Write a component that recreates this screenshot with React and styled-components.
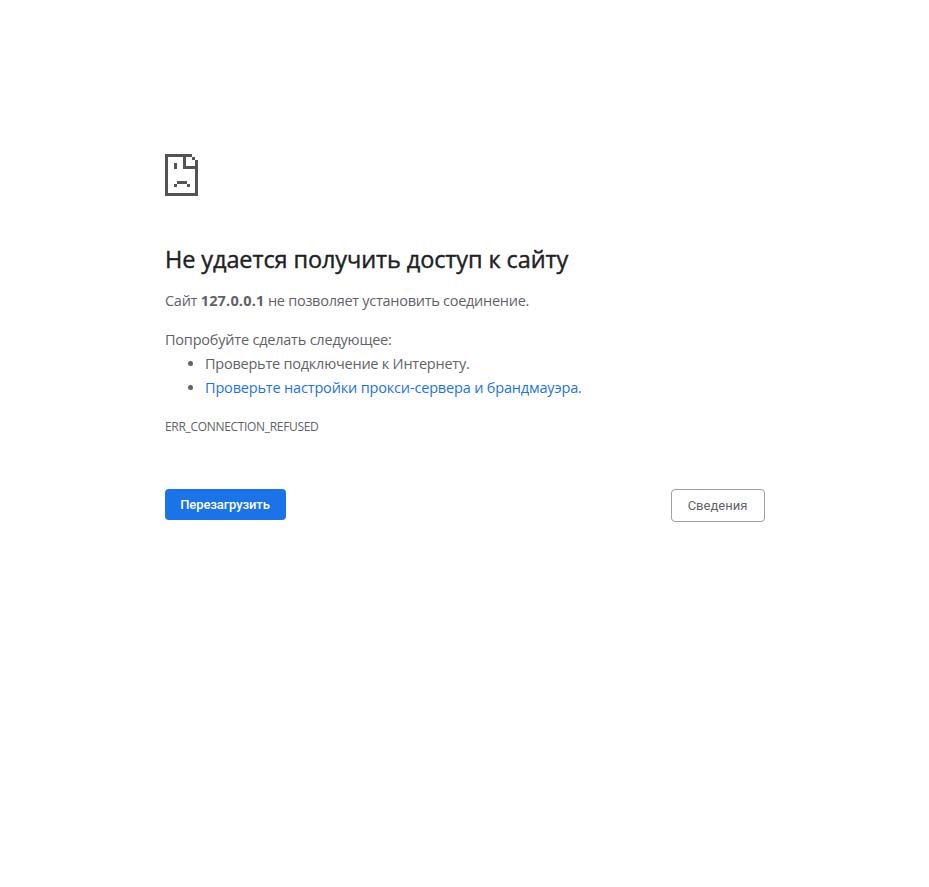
import React from "react";
import styled, { createGlobalStyle } from "styled-components";

const GlobalStyle = createGlobalStyle`
  body {
    margin: 0;
    background: #fff;
    color: #5f6368;
    font: 14.5px/24px "Open Sans", "Noto Sans", sans-serif;
  }
`;

const Page = styled.main`
  width: 601px;
  margin: 0 auto;
  padding: 154px 0 0 1px;
  box-sizing: border-box;
`;

const SadPage = styled.svg`
  display: block;
  width: 33px;
  height: 42px;
  fill: #535353;
`;

const Title = styled.h1`
  margin: 48px 0 15px;
  font-size: 23.5px;
  line-height: 30px;
  font-weight: 500;
  color: #202124;
  white-space: nowrap;
  -webkit-text-stroke: 0.4px #202124;
`;

const Text = styled.p`
  margin: 0 0 15px;
`;

const Line = styled.span`
  letter-spacing: ${(p) => p.$spacing || "0"};
  white-space: nowrap;
`;

const Host = styled.strong`
  letter-spacing: 0.18px;
`;

const Suggestions = styled.ul`
  margin: -15px 0 15px;
  padding-left: 40px;
`;

const Link = styled.a`
  color: #1a73e8;
  text-decoration: none;
`;

const ErrorCode = styled.div`
  font-size: 12px;
`;

const Actions = styled.div`
  display: flex;
  justify-content: space-between;
  align-items: flex-start;
  margin-top: 50px;
`;

const Button = styled.button`
  box-sizing: border-box;
  width: ${(p) => (p.$primary ? "121px" : "94px")};
  height: ${(p) => (p.$primary ? "31px" : "33px")};
  padding: 0 1px 0 0;
  border: ${(p) => (p.$primary ? "0" : "1px solid #9aa0a6")};
  border-radius: 4px;
  background: ${(p) => (p.$primary ? "#1a73e8" : "#fff")};
  color: ${(p) => (p.$primary ? "#fff" : "#5f6368")};
  font: ${(p) => (p.$primary ? 500 : 400)} 13px Roboto, sans-serif;
  letter-spacing: ${(p) => (p.$primary ? "-0.1px" : "0")};
  white-space: nowrap;
`;

export default function App() {
  return (
    <>
      <GlobalStyle />
      <Page>
        <SadPage viewBox="0 0 33 42" shapeRendering="crispEdges" aria-hidden="true">
          <path d="M0 0h27v3H3v36h27V6h3v36H0z M27 3h3v3h-3z M18 3h3v9h9v3H18z M9 9h3v6H9z M12 27h10v3H12z M9 30h3v3H9z M22 30h3v3h-3z" />
        </SadPage>
        <Title><Line $spacing="-0.1px">Не удается получить доступ к сайту</Line></Title>
        <Text><Line $spacing="-0.27px">Сайт <Host>127.0.0.1</Host> не позволяет установить соединение.</Line></Text>
        <Text><Line $spacing="-0.21px">Попробуйте сделать следующее:</Line></Text>
        <Suggestions>
          <li><Line $spacing="-0.23px">Проверьте подключение к Интернету.</Line></li>
          <li><Line $spacing="-0.17px"><Link href="#">Проверьте настройки прокси-сервера и брандмауэра</Link>.</Line></li>
        </Suggestions>
        <ErrorCode><Line $spacing="-0.32px">ERR_CONNECTION_REFUSED</Line></ErrorCode>
        <Actions>
          <Button $primary>Перезагрузить</Button>
          <Button>Сведения</Button>
        </Actions>
      </Page>
    </>
  );
}
